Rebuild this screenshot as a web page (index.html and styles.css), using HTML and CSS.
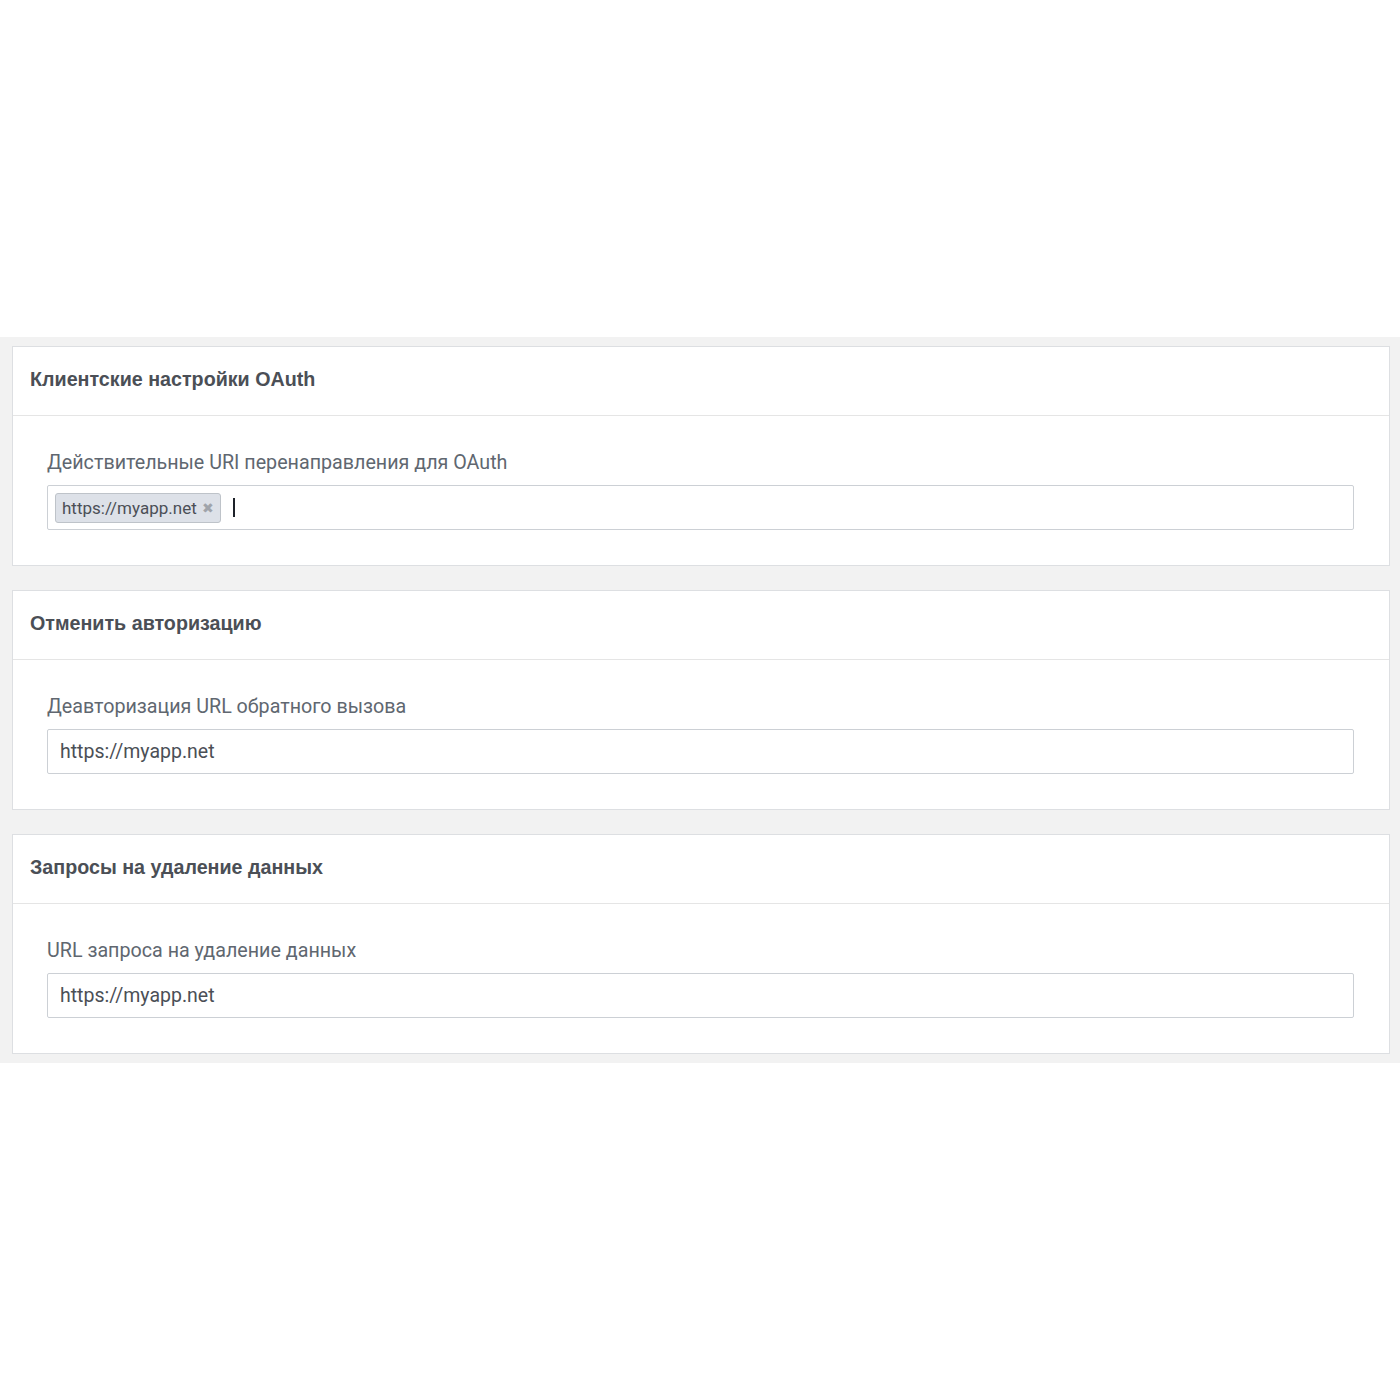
FILE: index.html
```html
<!DOCTYPE html>
<html lang="ru">
<head>
    <meta charset="UTF-8">
    <title>Настройки приложения</title>
    <link rel="stylesheet" href="styles.css">
</head>
<body>

<div class="top-space"></div>

<div class="settings">
    <div class="card">
        <div class="card-header">Клиентские настройки OAuth</div>
        <div class="card-body">
            <label class="field-label">Действительные URI перенаправления для OAuth</label>
            <div class="field tags">
                <span class="tag">https://myapp.net <span class="tag-remove">&#x2716;</span></span>
                <span class="caret"></span>
            </div>
        </div>
    </div>

    <div class="card">
        <div class="card-header">Отменить авторизацию</div>
        <div class="card-body">
            <label class="field-label">Деавторизация URL обратного вызова</label>
            <div class="field">https://myapp.net</div>
        </div>
    </div>

    <div class="card">
        <div class="card-header">Запросы на удаление данных</div>
        <div class="card-body">
            <label class="field-label">URL запроса на удаление данных</label>
            <div class="field">https://myapp.net</div>
        </div>
    </div>
</div>

</body>
</html>
```

FILE: styles.css
```css
body {
    font-family: Roboto, 'Liberation Sans', Arial, sans-serif;
    margin: 0;
    padding: 0;
    background: #fff;
}
.top-space {
    height: 337px;
}
.settings {
    background: #f2f2f2;
    padding: 9px 10px 9px 12px;
    display: flex;
    flex-direction: column;
    gap: 24px;
}
.card {
    background: #fff;
    border: 1px solid #dddfe2;
}
.card-header {
    height: 64px;
    padding-bottom: 4px;
    display: flex;
    align-items: center;
    padding-left: 17px;
    border-bottom: 1px solid #e5e5e5;
    font-family: 'Liberation Sans', Arial, sans-serif;
    font-size: 19.7px;
    font-weight: bold;
    color: #4b4f56;
}
.card-body {
    padding: 35px 35px 35px 34px;
}
.field-label {
    display: block;
    font-size: 19.7px;
    line-height: 24px;
    color: #606770;
    margin-bottom: 10px;
}
.field {
    height: 43px;
    border: 1px solid #ccd0d5;
    border-radius: 2px;
    display: flex;
    align-items: center;
    padding-left: 12px;
    font-size: 19.5px;
    color: #4b4f56;
}
.tags {
    padding-left: 7px;
}
.tag {
    display: inline-flex;
    align-items: center;
    height: 28px;
    padding: 0 6px 0 6px;
    background: #dde1e8;
    border: 1px solid #bec3c9;
    border-radius: 3px;
    font-size: 17px;
    color: #4b4f56;
}
.tag-remove {
    margin-left: 5px;
    font-size: 14px;
    color: #a0a4ab;
}
.caret {
    display: inline-block;
    width: 2px;
    height: 19px;
    background: #1d2129;
    margin-left: 12px;
}
```
